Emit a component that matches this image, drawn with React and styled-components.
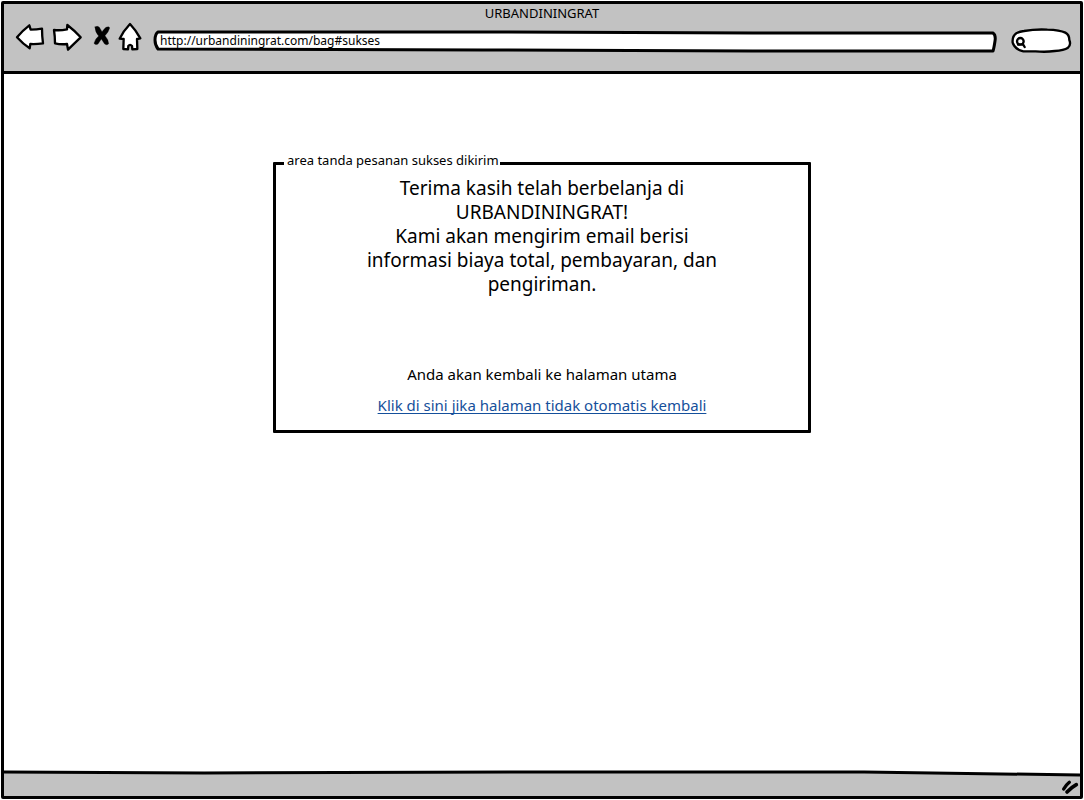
import React from 'react';
import styled, { createGlobalStyle } from 'styled-components';

const ink = '#000';
const chrome = '#c2c2c2';

const GlobalStyle = createGlobalStyle`
  *, *::before, *::after { box-sizing: border-box; }
  body {
    margin: 0;
    background: #fff;
    color: ${ink};
    font-family: "Noto Sans", "Open Sans", sans-serif;
  }
`;

const Page = styled.div`
  min-height: 100vh;
  padding: 1px;
  display: flex;
`;

const BrowserWindow = styled.div`
  flex: 1;
  display: flex;
  flex-direction: column;
  border: 3px solid ${ink};
  border-radius: 2px;
`;

const Header = styled.header`
  padding-bottom: 19px;
  background: ${chrome};
  border-bottom: 3px solid ${ink};
`;

const WindowTitle = styled.h1`
  margin: 0;
  font-size: 13px;
  font-weight: 400;
  line-height: 18px;
  text-align: center;
`;

const Toolbar = styled.form`
  display: flex;
  gap: 8px;
  padding: 0 8px 0 11px;
`;

const IconButton = styled.button`
  width: ${({ $width }) => $width}px;
  height: 30px;
  padding: 0;
  border: 0;
  background: none;
  cursor: pointer;
`;

const Drawing = styled.svg`
  display: block;
  width: 100%;
  height: 100%;
  overflow: visible;
  fill: #fff;
  stroke: ${ink};
  stroke-linecap: round;
  stroke-linejoin: round;
`;

const Field = styled.label`
  position: relative;
  height: 30px;
  flex: ${({ $width }) => ($width ? `0 0 ${$width}px` : '1 1 0')};
  margin-left: ${({ $width }) => ($width ? 6 : 0)}px;
`;

const FieldInput = styled.input`
  position: absolute;
  inset: 9px 6px 1px ${({ $indent }) => $indent}px;
  width: calc(100% - ${({ $indent }) => $indent + 6}px);
  height: 20px;
  padding: 0;
  border: 0;
  outline: 0;
  background: transparent;
  color: ${ink};
  font-family: inherit;
  font-size: 12px;
  line-height: 20px;
  appearance: none;
`;

const Content = styled.main`
  flex: 1;
  padding: 77px 0 40px;
`;

const OrderArea = styled.fieldset`
  width: 50%;
  min-width: 400px;
  margin: 0 auto;
  padding: 0 0 13px;
  border: 3px solid ${ink};
  border-radius: 1px;
`;

const AreaLabel = styled.legend`
  margin-left: 8px;
  padding: 0 1px 6px 3px;
  font-size: 13px;
  line-height: 18px;
`;

const AreaText = styled.div`
  text-align: center;
  line-height: 24px;
`;

const Message = styled.p`
  max-width: 360px;
  margin: 0 auto 66px;
  padding-top: 1px;
  font-size: 19px;
`;

const Note = styled.p`
  margin: 0 0 7px;
  font-size: 15px;
`;

const ReturnLink = styled.a`
  color: #15509b;
  text-decoration: underline;
  text-decoration-thickness: 1px;
  text-underline-offset: 2px;
  text-decoration-skip-ink: none;
`;

const LinkLine = styled.p`
  margin: 0;
  font-size: 15px;
`;

const Footer = styled.footer`
  height: 26px;
`;

const FooterEdge = styled.svg`
  display: block;
  width: 100%;
  height: 8px;
`;

const StatusBar = styled.div`
  height: 18px;
  display: flex;
  align-items: center;
  justify-content: flex-end;
  background: ${chrome};
`;

const Grip = styled.svg`
  width: 18px;
  height: 14px;
  overflow: visible;
  stroke: ${ink};
  stroke-linecap: round;
`;

function NavButton({ label, width, viewBox, children }) {
  return (
    <IconButton type="button" aria-label={label} $width={width}>
      <Drawing viewBox={viewBox} strokeWidth="7" aria-hidden="true">
        {children}
      </Drawing>
    </IconButton>
  );
}

export default function App() {
  return (
    <>
      <GlobalStyle />
      <Page>
        <BrowserWindow>
          <Header>
            <WindowTitle>URBANDININGRAT</WindowTitle>
            <Toolbar onSubmit={(event) => event.preventDefault()}>
              <NavButton label="Kembali" width={30} viewBox="45 66 90 90">
                <path d="M51 112 Q67 92 88 76 L92 89 Q110 89 126 86 Q126 108 129 130 Q109 133 91 132 L89 145 Q70 133 51 112Z" />
              </NavButton>
              <NavButton label="Maju" width={30} viewBox="159 66 90 90">
                <path d="M162 90 Q181 92 201 88 L202 75 Q223 91 242 112 Q220 133 204 149 L201 132 Q183 134 165 130 Q165 109 162 90Z" />
              </NavButton>
              <NavButton label="Berhenti" width={20} viewBox="273 66 60 90">
                <path
                  d="M285 81 Q292 76 298 82 L306 95 Q312 87 318 82 Q328 78 329 84 Q326 96 315 107 Q325 118 326 131 Q321 137 314 132 L304 117 L294 132 Q286 136 282 130 Q284 118 296 108 Q285 96 285 81Z"
                  fill={ink}
                  strokeWidth="1"
                />
              </NavButton>
              <NavButton label="Beranda" width={26} viewBox="357 66 78 90">
                <path d="M390 72 Q408 91 421 115 L411 117 L412 147 L397 148 L396 138 Q390 131 385 138 L384 148 L370 147 L371 117 L359 116 Q370 93 390 72Z" />
              </NavButton>
              <Field>
                <Drawing viewBox="0 0 844 30" preserveAspectRatio="none" strokeWidth="3" aria-hidden="true">
                  <path
                    d="M5 10 L330 10 L600 11 L840 11 Q843 13 842 19 Q841 26 840 29 L600 29 L330 28 L5 27 Q2 23 2 18 Q2 12 5 10Z"
                    vectorEffect="non-scaling-stroke"
                  />
                </Drawing>
                <FieldInput
                  $indent={7}
                  type="text"
                  aria-label="Alamat"
                  spellCheck={false}
                  defaultValue="http://urbandiningrat.com/bag#sukses"
                />
              </Field>
              <Field $width={61}>
                <Drawing viewBox="141 66 183 90" strokeWidth="7" aria-hidden="true">
                  <path d="M180 93 Q215 87 250 89 Q288 90 304 98 Q316 104 316 120 Q322 134 312 143 Q300 151 272 153 Q245 157 215 154 L178 154 Q152 148 146 128 Q144 108 158 99 Q168 94 180 93Z" />
                  <circle cx="169" cy="124" r="10" />
                  <path d="M162 134 L177 133 L182 141" />
                </Drawing>
                <FieldInput $indent={18} type="text" aria-label="Cari" />
              </Field>
            </Toolbar>
          </Header>

          <Content>
            <OrderArea>
              <AreaLabel>area tanda pesanan sukses dikirim</AreaLabel>
              <AreaText>
                <Message>
                  Terima kasih telah berbelanja di
                  <br />
                  URBANDININGRAT!
                  <br />
                  Kami akan mengirim email berisi
                  <br />
                  informasi biaya total, pembayaran, dan
                  <br />
                  pengiriman.
                </Message>
                <Note>Anda akan kembali ke halaman utama</Note>
                <LinkLine>
                  <ReturnLink href="#utama">Klik di sini jika halaman tidak otomatis kembali</ReturnLink>
                </LinkLine>
              </AreaText>
            </OrderArea>
          </Content>

          <Footer>
            <FooterEdge viewBox="0 0 1076 8" preserveAspectRatio="none" aria-hidden="true">
              <path d="M0 2 L540 2 L860 2 L1076 5 V8 H0Z" fill={chrome} />
              <path
                d="M0 2 L200 3 L540 2 L860 2 L1076 5"
                fill="none"
                stroke={ink}
                strokeWidth="3"
                vectorEffect="non-scaling-stroke"
              />
            </FooterEdge>
            <StatusBar>
              <Grip viewBox="186 60 54 42" aria-hidden="true">
                <path d="M191 87 Q197 76 208 67" strokeWidth="10" />
                <path d="M201 96 Q213 83 229 74" strokeWidth="11" />
              </Grip>
            </StatusBar>
          </Footer>
        </BrowserWindow>
      </Page>
    </>
  );
}
